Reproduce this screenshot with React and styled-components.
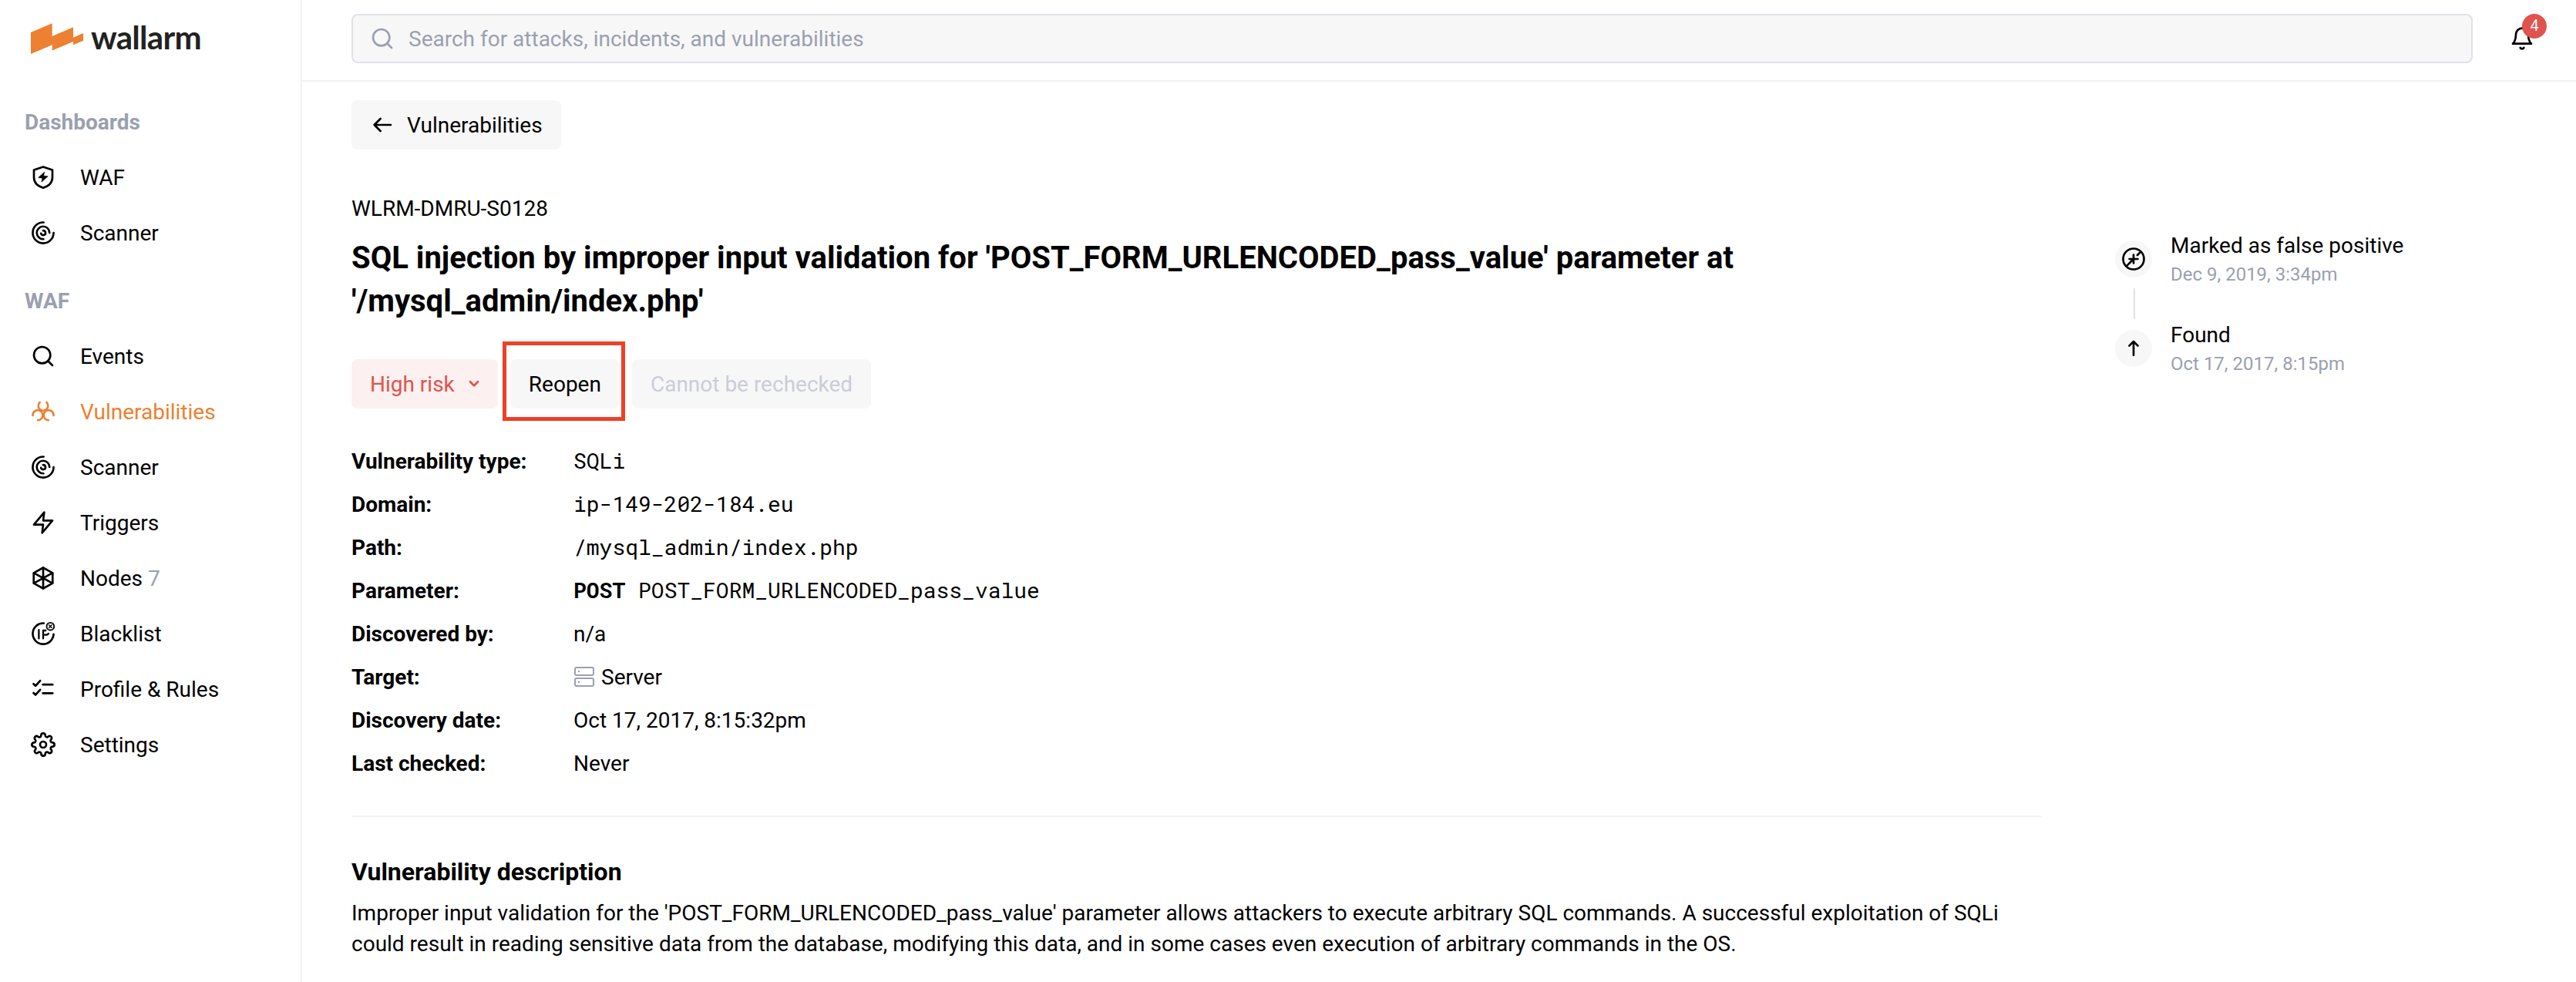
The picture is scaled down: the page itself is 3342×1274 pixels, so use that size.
import React from "react";
import styled, { createGlobalStyle } from "styled-components";
import { FiBell, FiSearch, FiSettings, FiZap } from "react-icons/fi";

const color = {
  text: "#000000",
  muted: "#9aa0b0",
  faint: "#cacdd8",
  line: "#f2f2f4",
  fieldLine: "#e1e2e8",
  surface: "#f7f7f7",
  brand: "#ee8031",
  danger: "#e1534d",
  dangerSurface: "#fdf0f0",
  highlight: "#ee4027",
};

const GlobalStyle = createGlobalStyle`
  * { box-sizing: border-box; }
  body {
    margin: 0;
    background: #fff;
    color: ${color.text};
    font-family: Roboto, "Liberation Sans", sans-serif;
    font-size: 28px;
    line-height: 40px;
  }
`;

const Page = styled.div`
  display: flex;
  height: 1274px;
  overflow: hidden;
`;

const Sidebar = styled.aside`
  flex: 0 0 392px;
  border-right: 2px solid ${color.line};
`;

const Logo = styled.div`
  display: flex;
  align-items: center;
  height: 100px;
  padding-left: 40px;
`;

const LogoMark = styled.svg`
  width: 68px;
  height: 40px;
  flex: none;
`;

const Wordmark = styled.span`
  margin-left: 10px;
  padding-bottom: 4px;
  color: #222;
  font-family: Lato, sans-serif;
  font-size: 42px;
  font-weight: 700;
  letter-spacing: -0.7px;
`;

const NavGroup = styled.nav`
  margin-top: ${(p) => p.$top}px;
`;

const NavTitle = styled.h2`
  margin: 0 0 19px;
  padding: 1px 0 0 32px;
  color: ${color.muted};
  font-size: 28px;
  font-weight: 700;
  line-height: 32px;
`;

const NavItem = styled.a`
  display: flex;
  align-items: center;
  gap: 32px;
  height: 72px;
  padding-left: 40px;
  color: ${(p) => (p.$active ? color.brand : color.text)};
`;

const Label = styled.span`
  padding-top: 2px;
`;

const NavCount = styled.span`
  color: ${color.muted};
`;

const IconSvg = styled.svg`
  display: block;
  width: 32px;
  height: 32px;
  flex: none;
  overflow: visible;
  fill: none;
  stroke: currentColor;
  stroke-width: 2;
  stroke-linecap: round;
  stroke-linejoin: round;
`;

const Main = styled.div`
  flex: 1;
  min-width: 0;
`;

const Header = styled.header`
  display: flex;
  align-items: center;
  gap: 48px;
  height: 106px;
  padding: 0 54px 4px 64px;
  border-bottom: 2px solid ${color.line};
`;

const SearchField = styled.div`
  display: flex;
  flex: 1;
  align-items: center;
  gap: 18px;
  height: 64px;
  padding: 0 22px;
  border: 2px solid ${color.fieldLine};
  border-radius: 8px;
  background: ${color.surface};
  color: ${color.muted};
`;

const Notifications = styled.div`
  position: relative;
  display: flex;
  width: 32px;
  height: 32px;
`;

const Badge = styled.span`
  position: absolute;
  top: -16px;
  left: 16px;
  width: 32px;
  height: 32px;
  border-radius: 50%;
  background: ${color.danger};
  color: #fff;
  font-size: 20px;
  line-height: 31px;
  text-align: center;
`;

const Content = styled.div`
  display: flex;
  gap: 96px;
  padding: 24px 64px 0;
`;

const Details = styled.main`
  flex: 0 0 2192px;
`;

const Button = styled.button`
  display: inline-flex;
  align-items: center;
  height: 64px;
  padding: 0 24px;
  border: 0;
  border-radius: 8px;
  background: ${(p) => (p.$tone === "danger" ? color.dangerSurface : color.surface)};
  color: ${(p) =>
    p.$tone === "danger" ? color.danger : p.disabled ? color.faint : color.text};
  font: inherit;
  white-space: nowrap;
`;

const BackButton = styled(Button)`
  gap: 16px;
`;

const VulnId = styled.div`
  margin-top: 57px;
`;

const Title = styled.h1`
  margin: 16px 0 47px;
  font-size: 40px;
  font-weight: 700;
  line-height: 56px;
`;

const Actions = styled.div`
  display: flex;
  gap: 16px;
`;

const Highlighted = styled.div`
  position: relative;
  display: flex;

  &::after {
    content: "";
    position: absolute;
    inset: -23px -7px -16px -10px;
    border: 5px solid ${color.highlight};
  }
`;

const Chevron = styled.svg`
  width: 14px;
  height: 10px;
  margin-left: 18px;
  fill: none;
  stroke: currentColor;
  stroke-width: 2.8;
  stroke-linecap: round;
  stroke-linejoin: round;
`;

const Facts = styled.dl`
  display: grid;
  grid-template-columns: 288px 1fr;
  grid-auto-rows: 56px;
  align-items: center;
  margin: 40px 0;
`;

const Term = styled.dt`
  padding-top: 2px;
  font-weight: 700;
`;

const Value = styled.dd`
  display: flex;
  align-items: center;
  margin: 0;
  white-space: pre;
`;

const Code = styled.code`
  font-family: "Roboto Mono", "DejaVu Sans Mono", monospace;
  font-size: 28px;
`;

const Method = styled.strong`
  font-weight: 700;
`;

const ServerIcon = styled.svg`
  width: 28px;
  height: 28px;
  margin-right: 8px;
  fill: none;
  stroke: ${color.muted};
  stroke-width: 2;
`;

const Divider = styled.hr`
  height: 2px;
  margin: 0;
  border: 0;
  background: ${color.line};
`;

const SectionTitle = styled.h2`
  margin: 51px 0 14px;
  font-size: 32px;
  font-weight: 700;
  line-height: 40px;
`;

const Paragraph = styled.p`
  margin: 0;
`;

const Timeline = styled.ol`
  margin: 168px 0 0;
  padding: 0;
  list-style: none;
`;

const Event = styled.li`
  display: flex;
  gap: 24px;
  height: 116px;
`;

const Track = styled.div`
  display: flex;
  flex-direction: column;
  align-items: center;
  gap: 14px;
  width: 48px;
  padding-top: 14px;
`;

const Dot = styled.div`
  display: flex;
  align-items: center;
  justify-content: center;
  width: 48px;
  height: 48px;
  flex: none;
  border-radius: 50%;
  background: ${color.surface};
`;

const Connector = styled.div`
  width: 2px;
  height: 40px;
  flex: none;
  margin-left: 2px;
  background: ${color.fieldLine};
`;

const EventName = styled.div`
  margin-top: 1px;
`;

const EventDate = styled.div`
  margin-top: 1px;
  color: ${color.muted};
  font-size: 24px;
  line-height: 32px;
`;

const Icon = ({ children }) => <IconSvg viewBox="0 0 24 24">{children}</IconSvg>;

const ShieldIcon = () => (
  <Icon>
    <path d="M12 1.800 21 4.900V12c0 5-3.800 8.600-9 10.300C6.800 20.600 3 17 3 12V4.900Z" />
    <path
      d="M13.200 7 7.200 12.300l4 .6-.8 3.800 6.300-5.700-4.100-.5Z"
      fill="currentColor"
      strokeWidth="0.4"
    />
  </Icon>
);

const ScannerIcon = () => (
  <Icon>
    <path d="M12.500 1.900A10.150 10.150 0 1 0 22.150 12" />
    <path d="M18.200 12A6.200 6.200 0 1 0 12.300 18.200" />
    <path d="M12 9.900A2.200 2.200 0 1 1 9.900 12.600" />
  </Icon>
);

const BiohazardIcon = () => (
  <Icon>
    <path d="M8.700 3A4.700 4.700 0 1 0 15.300 3" />
    <path d="M1.800 15.700A4.900 4.900 0 1 1 6.900 20.400" />
    <path d="M22.200 15.700A4.900 4.900 0 1 0 17.100 20.400" />
  </Icon>
);

const NodesIcon = () => (
  <Icon>
    <path d="M12 1.900 21.200 7v10L12 22.100 2.800 17V7Z" />
    <path d="M12 2v20M3 7l18 10M21 7 3 17" />
  </Icon>
);

const BlacklistIcon = () => (
  <Icon>
    <path d="M12.600 1.900A10.150 10.150 0 1 0 22.150 12.600" />
    <path
      d="M7.800 8.400v8.400M12 16.800V9h2.500M12 13.300h2.400c1.400 0 2.200-.5 2.800-1.300"
      strokeWidth="1.7"
    />
    <circle cx="19" cy="5" r="3.6" strokeWidth="1.4" />
    <path d="m17.600 3.600 2.800 2.800M20.400 3.600l-2.800 2.800" strokeWidth="1" />
  </Icon>
);

const RulesIcon = () => (
  <Icon>
    <path d="m2.600 6.900 2 1.900 4.500-5M11.700 7.600h9.500M2.600 15.700l2 1.900 4.500-5M11.700 16h9.500" />
  </Icon>
);

const BackIcon = () => (
  <Icon>
    <path d="M20.200 12H4.200M10.200 6 4.200 12l6 6" />
  </Icon>
);

const FalsePositiveIcon = () => (
  <Icon>
    <circle cx="12" cy="12" r="10.150" />
    <path d="M5 19l7-7M15.700 8.300 19 5M12 7.900v8.200M7.900 12h8.200" />
  </Icon>
);

const FoundIcon = () => (
  <Icon>
    <path d="M12 18.500v-13M7.800 9.500 12 5.300l4.200 4.200" />
  </Icon>
);

const dashboards = [
  { label: "WAF", icon: <ShieldIcon /> },
  { label: "Scanner", icon: <ScannerIcon /> },
];

const waf = [
  { label: "Events", icon: <FiSearch size={32} /> },
  { label: "Vulnerabilities", icon: <BiohazardIcon />, active: true },
  { label: "Scanner", icon: <ScannerIcon /> },
  { label: "Triggers", icon: <FiZap size={32} /> },
  { label: "Nodes", icon: <NodesIcon />, count: 7 },
  { label: "Blacklist", icon: <BlacklistIcon /> },
  { label: "Profile & Rules", icon: <RulesIcon /> },
  { label: "Settings", icon: <FiSettings size={32} /> },
];

const Nav = ({ title, items, top }) => (
  <NavGroup $top={top}>
    <NavTitle>{title}</NavTitle>
    {items.map(({ label, icon, active, count }) => (
      <NavItem key={label} $active={active}>
        {icon}
        <Label>
          {label}
          {count && <> <NavCount>{count}</NavCount></>}
        </Label>
      </NavItem>
    ))}
  </NavGroup>
);

const facts = [
  ["Vulnerability type:", <Code>SQLi</Code>],
  ["Domain:", <Code>ip-149-202-184.eu</Code>],
  ["Path:", <Code>/mysql_admin/index.php</Code>],
  ["Parameter:", <Code><Method>POST</Method> POST_FORM_URLENCODED_pass_value</Code>],
  ["Discovered by:", <Label>n/a</Label>],
  [
    "Target:",
    <>
      <ServerIcon viewBox="0 0 28 28">
        <rect x="2" y="2" width="24" height="10" rx="2" />
        <rect x="2" y="16" width="24" height="10" rx="2" />
        <path d="M6 7h2M6 21h2" />
      </ServerIcon>
      <Label>Server</Label>
    </>,
  ],
  ["Discovery date:", <Label>Oct 17, 2017, 8:15:32pm</Label>],
  ["Last checked:", <Label>Never</Label>],
];

export default function App() {
  return (
    <>
      <GlobalStyle />
      <Page>
        <Sidebar>
          <Logo>
            <LogoMark viewBox="0 0 68 40">
              <path
                d="M0 12 27.700 0.300V17L55 5.300v13.400L68 13v9.700l-13 5.600V24L27.700 35.600v-7.300L0 40Z"
                fill={color.brand}
              />
            </LogoMark>
            <Wordmark>wallarm</Wordmark>
          </Logo>
          <Nav title="Dashboards" items={dashboards} top={42} />
          <Nav title="WAF" items={waf} top={36} />
        </Sidebar>
        <Main>
          <Header>
            <SearchField>
              <FiSearch size={32} />
              <Label>Search for attacks, incidents, and vulnerabilities</Label>
            </SearchField>
            <Notifications>
              <FiBell size={32} />
              <Badge>4</Badge>
            </Notifications>
          </Header>
          <Content>
            <Details>
              <BackButton>
                <BackIcon />
                <Label>Vulnerabilities</Label>
              </BackButton>
              <VulnId>WLRM-DMRU-S0128</VulnId>
              <Title>
                SQL injection by improper input validation for
                'POST_FORM_URLENCODED_pass_value' parameter at
                '/mysql_admin/index.php'
              </Title>
              <Actions>
                <Button $tone="danger">
                  <Label>High risk</Label>
                  <Chevron viewBox="0 0 14 10">
                    <path d="M2 2.200 7 7.200l5-5" />
                  </Chevron>
                </Button>
                <Highlighted>
                  <Button>
                    <Label>Reopen</Label>
                  </Button>
                </Highlighted>
                <Button disabled>
                  <Label>Cannot be rechecked</Label>
                </Button>
              </Actions>
              <Facts>
                {facts.map(([term, value]) => (
                  <React.Fragment key={term}>
                    <Term>{term}</Term>
                    <Value>{value}</Value>
                  </React.Fragment>
                ))}
              </Facts>
              <Divider />
              <SectionTitle>Vulnerability description</SectionTitle>
              <Paragraph>
                Improper input validation for the
                'POST_FORM_URLENCODED_pass_value' parameter allows attackers to
                execute arbitrary SQL commands. A successful exploitation of SQLi
                could result in reading sensitive data from the database,
                modifying this data, and in some cases even execution of
                arbitrary commands in the OS.
              </Paragraph>
            </Details>
            <Timeline>
              <Event>
                <Track>
                  <Dot><FalsePositiveIcon /></Dot>
                  <Connector />
                </Track>
                <div>
                  <EventName>Marked as false positive</EventName>
                  <EventDate>Dec 9, 2019, 3:34pm</EventDate>
                </div>
              </Event>
              <Event>
                <Track>
                  <Dot><FoundIcon /></Dot>
                </Track>
                <div>
                  <EventName>Found</EventName>
                  <EventDate>Oct 17, 2017, 8:15pm</EventDate>
                </div>
              </Event>
            </Timeline>
          </Content>
        </Main>
      </Page>
    </>
  );
}
